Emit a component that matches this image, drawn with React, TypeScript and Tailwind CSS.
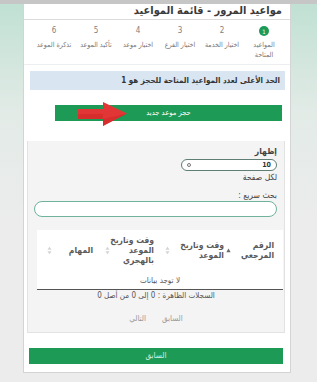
import React from "react";

// ---------------------------------------------------------------------------
// Steps of the booking wizard
// ---------------------------------------------------------------------------

const STEPS = [
  { n: "1", label: ["المواعيد", "المتاحة"] },
  { n: "2", label: ["اختيار الخدمة"] },
  { n: "3", label: ["اختيار الفرع"] },
  { n: "4", label: ["اختيار موعد"] },
  { n: "5", label: ["تأكيد الموعد"] },
  { n: "6", label: ["تذكرة الموعد"] },
];

function SortIcon({ active }: { active?: boolean }) {
  if (active) {
    return (
      <svg width="5" height="5" viewBox="0 0 6 6" className="shrink-0">
        <path d="M3 0.5 L5.6 5 L0.4 5 Z" fill="#6b6b6b" />
      </svg>
    );
  }
  return (
    <svg width="5" height="9" viewBox="0 0 6 10" className="shrink-0">
      <path d="M3 0.5 L5.5 4 L0.5 4 Z" fill="#d4d4d4" />
      <path d="M3 9.5 L5.5 6 L0.5 6 Z" fill="#d4d4d4" />
    </svg>
  );
}

function HeaderCell({
  lines,
  width,
  pr,
  pl,
  active,
}: {
  lines: string[];
  width: string;
  pr: string;
  pl: string;
  active?: boolean;
}) {
  return (
    <div className={`flex items-center justify-between ${width} ${pr} ${pl}`}>
      <div className="text-right text-[8.5px] font-bold leading-[10px] text-[#5a5a5a]">
        {lines.map((l) => (
          <div key={l} className="whitespace-nowrap">
            {l}
          </div>
        ))}
      </div>
      <SortIcon active={active} />
    </div>
  );
}

export default function App() {
  return (
    <div className="relative h-[382px] w-[317px] overflow-hidden bg-[linear-gradient(180deg,#bfe0d3_0%,#e3ebe7_30%,#ececec_60%)] font-['DejaVu_Sans_Condensed','DejaVu_Sans',sans-serif]">
      <div className="h-[4px] bg-[#c6c6c6]" />

      {/* ── Card ─────────────────────────────────────────────────────── */}
      <div
        dir="rtl"
        className="ml-[23px] flex h-[369px] w-[268px] flex-col border-x border-b border-[#d4d4d4] bg-white"
      >
        <div className="flex h-[16px] items-center border-b border-[#dcdcdc] px-[8px] text-[11px] font-bold text-[#3a3a3a]">
          مواعيد المرور - قائمة المواعيد
        </div>

        {/* stepper */}
        <div className="flex h-[45px] border-b border-[#eeeeee] px-[5px] pt-[6px]">
          {STEPS.map((s, i) => (
            <div key={s.n} className="flex w-[42px] flex-col items-center">
              {i === 0 ? (
                <div className="flex h-[10px] w-[10px] items-center justify-center rounded-full bg-[#1c9a56] text-[6px] text-white">
                  {s.n}
                </div>
              ) : (
                <div className="flex h-[10px] items-center text-[8px] text-[#808080]">
                  {s.n}
                </div>
              )}
              <div className="mt-[4px] text-center text-[7px] leading-[10px] text-[#777]">
                {s.label.map((l) => (
                  <div key={l} className="whitespace-nowrap">
                    {l}
                  </div>
                ))}
              </div>
            </div>
          ))}
        </div>

        {/* limit notice */}
        <div className="ml-[6px] mr-[5px] mt-[6px] flex h-[19px] items-center bg-[#d9e6f2] px-[5px] text-[8px] font-bold text-[#333]">
          الحد الأعلى لعدد المواعيد المتاحة للحجز هو 1
        </div>

        {/* new booking button + red pointer */}
        <div className="relative mr-[8px] ml-[31px] mt-[15px]">
          <div className="flex h-[16px] items-center justify-center bg-[#1c9a56] text-[7.5px] text-white">
            حجز موعد جديد
          </div>
          <svg
            width="50"
            height="26"
            viewBox="0 0 50 26"
            className="absolute left-[23px] top-[-4px]"
          >
            <path d="M0 8 L25 8 L25 1 L49 12.5 L25 25 L25 18 L0 18 Z" fill="#e23636" />
            <path d="M0 13 L25 13 L25 25 L49 12.5 L25 18 L0 18 Z" fill="#c92424" opacity="0.5" />
          </svg>
        </div>

        {/* table panel */}
        <div className="ml-[3px] mr-[5px] mt-[20px] flex h-[192px] flex-col border-x border-b border-[#e2e2e2] bg-[#f4f4f4] px-[7px] pt-[4px]">
          <div className="text-[8.5px] font-bold leading-[12px] text-[#444]">إظهار</div>
          <div className="mt-[2px] flex h-[12px] w-[96px] items-center justify-between rounded-full border border-[#5f7f74] bg-white px-[5px]">
            <span className="text-[7px] font-bold text-[#333]">10</span>
            <span className="h-[4px] w-[4px] rounded-full border border-[#777]" />
          </div>
          <div className="text-[8.5px] leading-[12px] text-[#444]">لكل صفحة</div>

          <div className="mt-[6px] text-[8.5px] leading-[12px] text-[#444]">بحث سريع :</div>
          <div className="h-[16px] w-[243px] rounded-full border-[1.5px] border-[#6fb39b] bg-white" />

          <div className="mt-[13px] mr-[-6px] ml-[2px] bg-white">
            <div className="flex h-[40px]">
              <HeaderCell lines={["الرقم", "المرجعي"]} width="w-[58px]" pr="pr-[9px]" pl="pl-[1px]" active />
              <HeaderCell lines={["وقت وتاريخ", "الموعد"]} width="w-[62px]" pr="pr-[1px]" pl="pl-[2px]" />
              <HeaderCell lines={["وقت وتاريخ", "الموعد", "بالهجري"]} width="w-[60px]" pr="pr-[9px]" pl="pl-[3px]" />
              <HeaderCell lines={["المهام"]} width="w-[60px]" pr="pr-[10px]" pl="pl-[4px]" />
            </div>
            <div className="flex h-[20px] items-center justify-center border-b-[1.5px] border-[#555] pt-[3px] text-[8px] text-[#555]">
              لا توجد بيانات
            </div>
          </div>

          <div className="flex justify-center text-[8px] leading-[12px] text-[#555]">
            <span>السجلات الظاهرة : 0 إلى 0 من أصل 0</span>
          </div>
          <div className="mt-[11px] flex justify-center gap-[16px] text-[8px] leading-[12px] text-[#999]">
            <span>السابق</span>
            <span>التالي</span>
          </div>
        </div>

        <div className="mr-[7px] ml-[5px] mt-[15px] flex h-[16px] items-center justify-center bg-[#1c9a56] text-[8px] text-[#d8f2e2]">
          السابق
        </div>
      </div>
    </div>
  );
}
